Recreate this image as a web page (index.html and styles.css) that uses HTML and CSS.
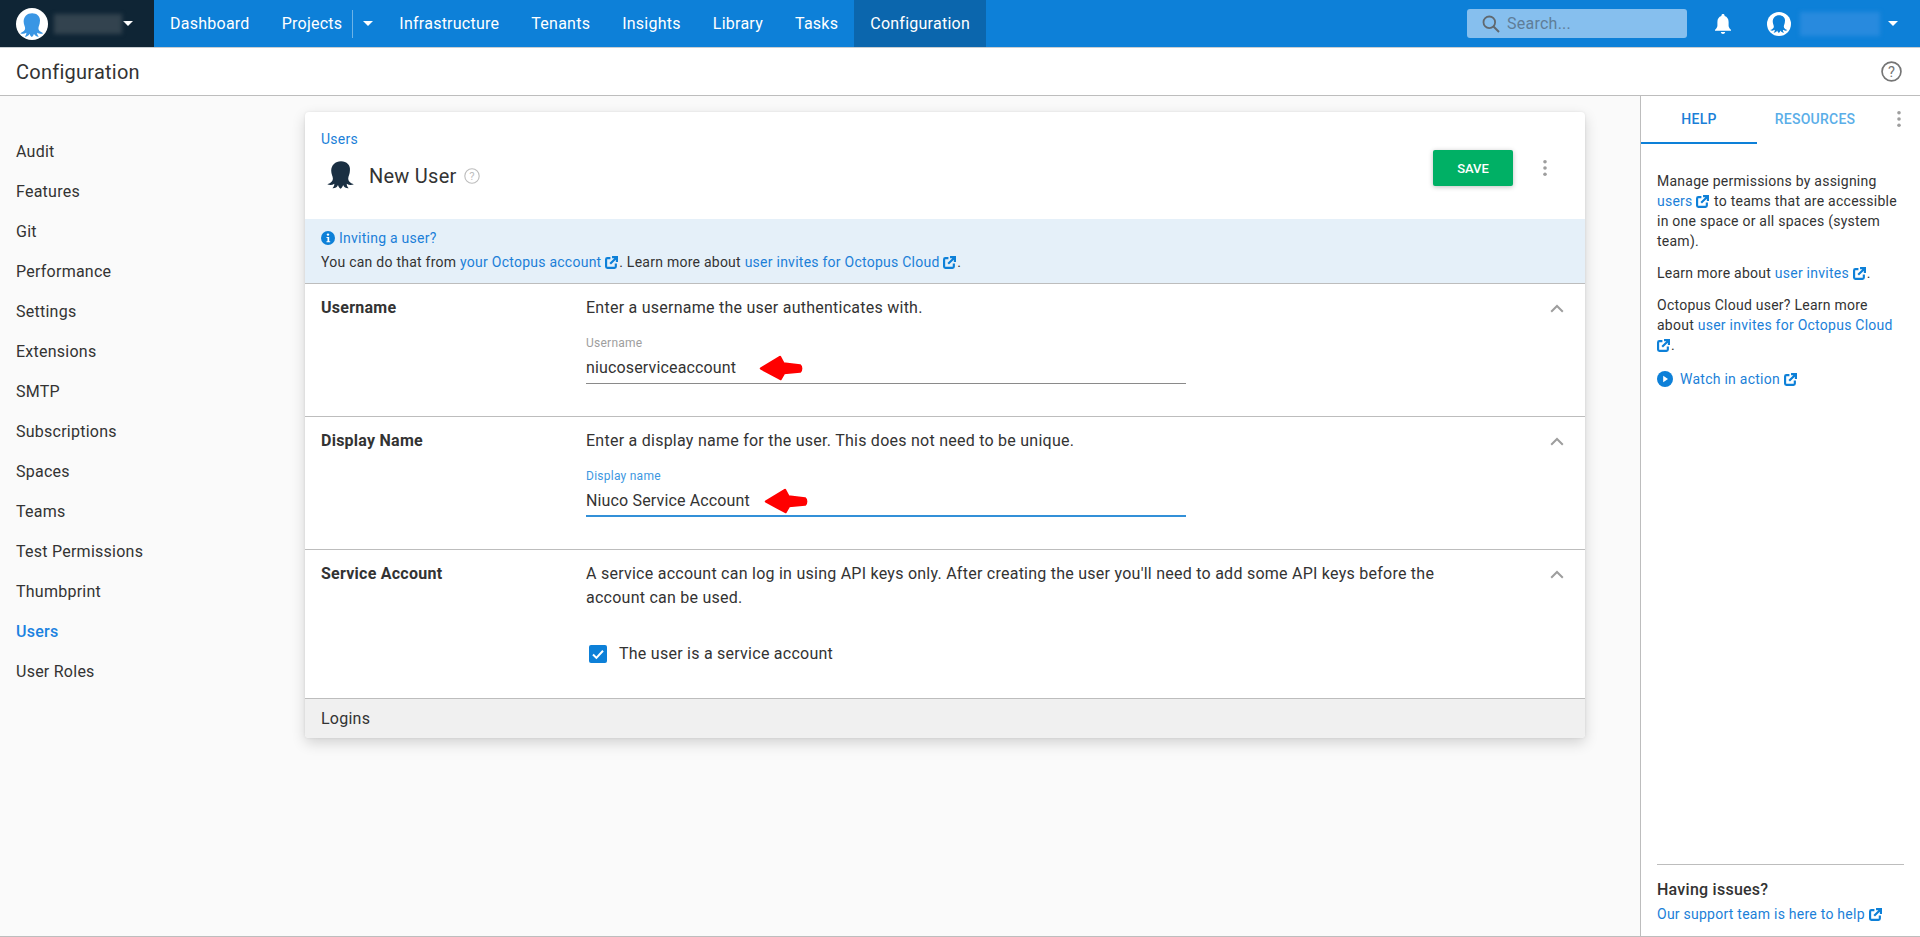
FILE: index.html
```html
<!DOCTYPE html>
<html lang="en">
<head>
<meta charset="utf-8">
<title>New User - Configuration</title>
<link rel="stylesheet" href="styles.css">
</head>
<body>
<svg class="defs" aria-hidden="true">
  <symbol id="octo" viewBox="0 0 28 28">
    <path d="M14 .3C8.300.3 4.200 4.300 4.200 9.800c0 3.400 1.600 5.300 1.700 7.700.1 2.600-1.700 4.400-5.600 5.700 2 1.200 5 1.100 7-.4.2 1.500-.4 2.900-1.800 4.400 2.500.2 4.500-1.100 5.500-3.300.3 1.300 1.100 2.600 2.600 3.800 1.400-1.100 2.200-2.500 2.500-3.800 1 2.200 3 3.500 5.500 3.300-1.400-1.500-2-2.900-1.800-4.400 2 1.500 5 1.600 7 .4-3.900-1.300-5.700-3.100-5.600-5.700.1-2.400 1.700-4.300 1.700-7.700C23.800 4.300 19.700.3 14 .3z"/>
  </symbol>
  <symbol id="ext" viewBox="0 0 12 12">
    <path d="M5 2H2.200C1.500 2 1 2.500 1 3.200v6.600C1 10.500 1.500 11 2.200 11h6.600c.7 0 1.200-.5 1.200-1.200V7" fill="none" stroke="currentColor" stroke-width="2"/>
    <path d="M4.800 7.200 10 2M6.500 1h4.500v4.500" fill="none" stroke="currentColor" stroke-width="2"/>
  </symbol>
  <symbol id="dots" viewBox="0 0 6 20">
    <circle cx="3" cy="3" r="2"/><circle cx="3" cy="10" r="2"/><circle cx="3" cy="17" r="2"/>
  </symbol>
  <symbol id="chev" viewBox="0 0 14 9">
    <path d="M1.200 7.800 7 2l5.800 5.800" fill="none" stroke="currentColor" stroke-width="2"/>
  </symbol>
  <symbol id="red" viewBox="0 0 44 26">
    <path d="M2 13.500 21 2l3.500 6.500L41 10.500c1.500 1.500 1.500 4.500 0 6L25 18l-3.500 6z" stroke="#f00" stroke-width="2.500" stroke-linejoin="round"/>
  </symbol>
</svg>

<header class="topnav">
  <div class="brand">
    <span class="avatar avatar-brand"><svg class="octo-mini"><use href="#octo"/></svg></span>
    <span class="blur blur-dark"></span>
    <span class="caret caret-brand"></span>
  </div>
  <nav class="menu">
    <a class="menu-item">Dashboard</a>
    <a class="menu-item menu-projects">Projects</a>
    <span class="menu-split"><span class="caret"></span></span>
    <a class="menu-item">Infrastructure</a>
    <a class="menu-item">Tenants</a>
    <a class="menu-item">Insights</a>
    <a class="menu-item">Library</a>
    <a class="menu-item">Tasks</a>
    <a class="menu-item menu-active">Configuration</a>
  </nav>
  <div class="nav-right">
    <div class="search">
      <svg class="search-icon" viewBox="0 0 18 18"><circle cx="7.300" cy="7.300" r="5.800" fill="none" stroke="currentColor" stroke-width="1.800"/><path d="m11.500 11.500 5.500 5.500" stroke="currentColor" stroke-width="2" fill="none"/></svg>
      <span>Search...</span>
    </div>
    <svg class="bell" viewBox="0 0 18 20"><path d="M9 0c-1 0-1.600.7-1.600 1.600v.5C4.800 2.900 3.400 5 3.400 8v3.500c0 1.700-1 3.200-2.400 4.300v1h16v-1c-1.400-1.100-2.400-2.600-2.400-4.300V8c0-3-1.400-5.100-4-5.900v-.5C10.600.7 10 0 9 0zM6.800 18c.2 1.100 1.100 2 2.200 2s2-.9 2.200-2z"/></svg>
    <span class="avatar avatar-user"><svg class="octo-mini"><use href="#octo"/></svg></span>
    <span class="blur blur-light"></span>
    <span class="caret"></span>
  </div>
</header>

<div class="pagehead">
  <h1>Configuration</h1>
  <svg class="help-round" viewBox="0 0 20 20"><circle cx="10" cy="10" r="9" fill="none" stroke="currentColor" stroke-width="1.600"/><text x="10" y="15" text-anchor="middle" class="help-q">?</text></svg>
</div>

<div class="workspace">
  <aside class="sidebar">
    <a>Audit</a><a>Features</a><a>Git</a><a>Performance</a><a>Settings</a><a>Extensions</a><a>SMTP</a><a>Subscriptions</a><a>Spaces</a><a>Teams</a><a>Test Permissions</a><a>Thumbprint</a><a class="side-active">Users</a><a>User Roles</a>
  </aside>

  <main class="center">
    <section class="card">
      <div class="card-head">
        <div class="card-title">
          <a class="crumb">Users</a>
          <div class="title-row">
            <svg class="octo-title"><use href="#octo"/></svg>
            <h2>New User</h2>
            <svg class="help-small" viewBox="0 0 20 20"><circle cx="10" cy="10" r="9" fill="none" stroke="currentColor" stroke-width="1.400"/><text x="10" y="15" text-anchor="middle" class="help-q">?</text></svg>
          </div>
        </div>
        <div class="card-actions">
          <button class="save">SAVE</button>
          <svg class="dots"><use href="#dots"/></svg>
        </div>
      </div>

      <div class="notice">
        <div class="notice-title">
          <svg class="info" viewBox="0 0 14 14"><circle cx="7" cy="7" r="7"/><circle cx="7" cy="3.600" r="1.200" fill="#fff"/><path d="M5.500 6h2.700v4.200h1v1H5.500v-1h1V7h-1z" fill="#fff"/></svg>
          <a>Inviting a user?</a>
        </div>
        <div class="notice-line">You can do that from <a>your Octopus account <svg class="ext"><use href="#ext"/></svg></a>. Learn more about <a>user invites for Octopus Cloud <svg class="ext"><use href="#ext"/></svg></a>.</div>
      </div>

      <div class="row row-user">
        <div class="row-title">Username</div>
        <div class="row-body">
          <p class="desc">Enter a username the user authenticates with.</p>
          <div class="field">
            <label class="field-label">Username</label>
            <div class="field-value">niucoserviceaccount</div>
            <svg class="red red-one"><use href="#red"/></svg>
          </div>
        </div>
        <svg class="chev"><use href="#chev"/></svg>
      </div>

      <div class="row row-display">
        <div class="row-title">Display Name</div>
        <div class="row-body">
          <p class="desc">Enter a display name for the user. This does not need to be unique.</p>
          <div class="field field-focus">
            <label class="field-label">Display name</label>
            <div class="field-value">Niuco Service Account</div>
            <svg class="red red-two"><use href="#red"/></svg>
          </div>
        </div>
        <svg class="chev"><use href="#chev"/></svg>
      </div>

      <div class="row row-service">
        <div class="row-title">Service Account</div>
        <div class="row-body">
          <p class="desc desc-wide">A service account can log in using API keys only. After creating the user you'll need to add some API keys before the account can be used.</p>
          <div class="check">
            <span class="checkbox"><svg viewBox="0 0 18 18"><path d="m4 9.500 3.400 3.400L14 5.800" fill="none" stroke="#fff" stroke-width="2"/></svg></span>
            <span>The user is a service account</span>
          </div>
        </div>
        <svg class="chev"><use href="#chev"/></svg>
      </div>

      <div class="logins">Logins</div>
    </section>
  </main>

  <aside class="helppanel">
    <div class="tabs">
      <div class="tab tab-active">HELP</div>
      <div class="tab">RESOURCES</div>
      <svg class="dots dots-tabs"><use href="#dots"/></svg>
    </div>
    <div class="help-body">
      <p>Manage permissions by assigning <a>users <svg class="ext"><use href="#ext"/></svg></a> to teams that are accessible in one space or all spaces (system team).</p>
      <p>Learn more about <a>user invites <svg class="ext"><use href="#ext"/></svg></a>.</p>
      <p>Octopus Cloud user? Learn more about <a>user invites for Octopus Cloud <svg class="ext"><use href="#ext"/></svg></a>.</p>
      <div class="watch">
        <svg class="play" viewBox="0 0 16 16"><circle cx="8" cy="8" r="8"/><path d="M6.200 4.800v6.400L11 8z" fill="#fff"/></svg>
        <a>Watch in action <svg class="ext"><use href="#ext"/></svg></a>
      </div>
    </div>
    <div class="help-foot">
      <h3>Having issues?</h3>
      <a>Our support team is here to help <svg class="ext"><use href="#ext"/></svg></a>
    </div>
  </aside>
</div>
</body>
</html>
```

FILE: styles.css
```css
* { box-sizing: border-box; }
html, body { margin: 0; padding: 0; }
body {
  width: 1920px;
  height: 937px;
  overflow: hidden;
  display: flex;
  flex-direction: column;
  background: #fafafa;
  color: #333;
  font-family: Roboto, "Liberation Sans", sans-serif;
  font-size: 16px;
  letter-spacing: .25px;
}
a { color: #1b7fd8; text-decoration: none; }
h1, h2, h3, p { margin: 0; font-weight: 400; }
.defs { display: none; }

/* top nav */
.topnav {
  flex: none;
  height: 48px;
  display: flex;
  background: #0d80d8;
  border-bottom: 1px solid #c9ced2;
  color: #fff;
}
.brand {
  width: 154px;
  background: #0f2535;
  display: flex;
  align-items: center;
  padding-left: 16px;
}
.avatar {
  border-radius: 50%;
  background: #fff;
  display: flex;
  align-items: center;
  justify-content: center;
  flex: none;
  width: 32px;
  height: 32px;
}
.avatar-brand { fill: #3a96e4; }
.avatar-user { width: 24px; height: 24px; fill: #0d80d8; }
.octo-mini { width: 76%; height: 76%; margin-top: 8%; }
.blur { display: block; filter: blur(2px); }
.blur-dark { width: 68px; height: 20px; margin-left: 6px; background: #33434f; }
.blur-light { width: 80px; height: 24px; background: #288ade; margin-left: 9px; }
.caret {
  display: block;
  width: 0;
  height: 0;
  border-left: 5px solid transparent;
  border-right: 5px solid transparent;
  border-top: 5px solid #fff;
}
.caret-brand { margin-left: 1px; }
.menu { display: flex; align-items: stretch; height: 47px; }
.menu-item {
  display: flex;
  align-items: center;
  padding: 0 16px;
  color: #fff;
  line-height: 47px;
}
.menu-projects { padding-right: 10px; }
.menu-split {
  width: 31px;
  display: flex;
  align-items: center;
  justify-content: center;
  position: relative;
}
.menu-split::before {
  content: "";
  position: absolute;
  left: 0;
  top: 10px;
  height: 28px;
  width: 1px;
  background: rgba(255, 255, 255, .4);
}
.menu-active { background: #0b66ad; }
.nav-right {
  margin-left: auto;
  display: flex;
  align-items: center;
  padding-right: 22px;
  height: 47px;
}
.search {
  width: 220px;
  height: 29px;
  background: #86bfee;
  border-radius: 3px;
  display: flex;
  align-items: center;
  gap: 7px;
  padding-left: 15px;
  color: #5f7d98;
}
.search-icon { width: 18px; height: 18px; color: #60686e; }
.bell { width: 18px; height: 20px; fill: #fff; margin-left: 27px; margin-right: 35px; }
.blur-light + .caret { margin-left: 8px; }

/* page header */
.pagehead {
  flex: none;
  height: 48px;
  background: #fff;
  border-bottom: 1px solid #bdbdbd;
  display: flex;
  align-items: center;
  justify-content: space-between;
  padding: 0 16px;
}
.pagehead h1 { font-size: 20px; line-height: 28px; color: #333; }
.help-round { width: 21px; height: 21px; color: #757575; margin-right: 2px; }
.help-q { font: 400 14px Roboto, sans-serif; fill: currentColor; }

/* layout */
.workspace {
  flex: 1;
  min-height: 0;
  display: flex;
  border-bottom: 1px solid #bdbdbd;
}
.sidebar {
  width: 305px;
  flex: none;
  padding-top: 36px;
  display: flex;
  flex-direction: column;
}
.sidebar a {
  color: #333;
  line-height: 40px;
  height: 40px;
  padding-left: 16px;
}
.sidebar a.side-active { color: #1b82e0; font-weight: 500; }
.center { flex: none; width: 1335px; padding-top: 16px; }

/* card */
.card {
  width: 1280px;
  background: #fff;
  border-radius: 4px;
  overflow: hidden;
  box-shadow: 0 5px 14px rgba(0, 0, 0, .16), 0 0 3px rgba(0, 0, 0, .08);
}
.card-head {
  height: 107px;
  display: flex;
  justify-content: space-between;
  padding: 18px 16px 0;
}
.crumb { display: block; font-size: 14px; line-height: 18px; }
.title-row { display: flex; align-items: center; margin-top: 12px; padding-left: 6px; }
.octo-title { width: 28px; height: 28px; fill: #1a2f42; margin-top: -3px; }
.title-row h2 { font-size: 20px; line-height: 32px; margin-left: 14px; }
.help-small { width: 16px; height: 16px; color: #bdbdbd; margin-left: 7px; }
.card-actions { display: flex; align-items: flex-start; padding-top: 20px; padding-right: 21px; }
.save {
  width: 80px;
  height: 36px;
  border: 0;
  border-radius: 2px;
  background: #00b065;
  color: #fff;
  font: 500 13px Roboto, sans-serif;
  box-shadow: 0 1px 5px rgba(0, 0, 0, .25);
}
.dots { width: 6px; height: 18px; fill: #9e9e9e; margin-left: 29px; margin-top: 9px; }

.notice {
  height: 65px;
  background: #e5f0f9;
  border-bottom: 1px solid #bdbdbd;
  padding: 9px 16px 0;
  font-size: 14px;
  line-height: 20px;
}
.notice-title { display: flex; align-items: center; gap: 4px; }
.info { width: 14px; height: 14px; fill: #0d80d8; }
.notice-line { margin-top: 4px; }
.ext { width: 13px; height: 13px; color: #0d80d8; vertical-align: -2px; margin-right: 1px; }

.row {
  display: flex;
  padding: 12px 16px 0;
  border-bottom: 1px solid #bdbdbd;
}
.row-user { height: 133px; }
.row-display { height: 133px; }
.row-service { height: 149px; }
.row-title { width: 265px; flex: none; font-weight: 700; line-height: 24px; color: #333; }
.row-body { flex: 1; min-width: 0; }
.desc { line-height: 24px; }
.desc-wide { width: 866px; }
.chev { width: 14px; height: 9px; color: #9e9e9e; margin: 8px 5px 0 0; flex: none; }
.field {
  position: relative;
  width: 600px;
  margin-top: 15px;
  border-bottom: 1px solid #8a8a8a;
  padding-bottom: 3px;
}
.field-label { display: block; font-size: 12px; line-height: 16px; color: #9e9e9e; }
.field-value { line-height: 24px; margin-top: 5px; letter-spacing: .15px; }
.field-focus { border-bottom: 2px solid #3390d8; padding-bottom: 2px; }
.field-focus .field-label { color: #3d97df; }
.red { position: absolute; fill: #f00; width: 44px; height: 26px; }
.red-one { left: 173px; top: 20px; }
.red-two { left: 178px; top: 20px; }
.check { display: flex; align-items: center; gap: 12px; margin-top: 32px; padding-left: 3px; line-height: 24px; }
.checkbox { width: 18px; height: 18px; border-radius: 2px; background: #0d80d8; display: block; }
.checkbox svg { display: block; width: 18px; height: 18px; }
.logins { height: 39px; background: #f0f0f0; padding-left: 16px; line-height: 40px; }

/* help panel */
.helppanel {
  flex: 1;
  min-width: 0;
  background: #fff;
  border-left: 1px solid #bdbdbd;
  display: flex;
  flex-direction: column;
}
.tabs { position: relative; display: flex; height: 48px; flex: none; }
.tab {
  font-size: 14px;
  font-weight: 500;
  line-height: 46px;
  height: 48px;
  width: 116px;
  text-align: center;
  color: #5aaee8;
}
.tab-active { color: #1b7fd8; border-bottom: 2px solid #0d80d8; }
.dots-tabs { position: absolute; left: 255px; top: 14px; margin: 0; }
.help-body { padding: 27px 16px 0; font-size: 14px; line-height: 20px; }
.help-body p { margin-bottom: 12px; }
.watch { display: flex; align-items: center; gap: 7px; margin-top: 14px; }
.play { width: 16px; height: 16px; fill: #0d80d8; }
.help-foot {
  margin: auto 16px 0;
  border-top: 1px solid #bdbdbd;
  padding: 13px 0 12px;
  font-size: 14px;
  line-height: 20px;
}
.help-foot h3 { font-size: 16px; font-weight: 500; line-height: 24px; margin-bottom: 2px; }
```
